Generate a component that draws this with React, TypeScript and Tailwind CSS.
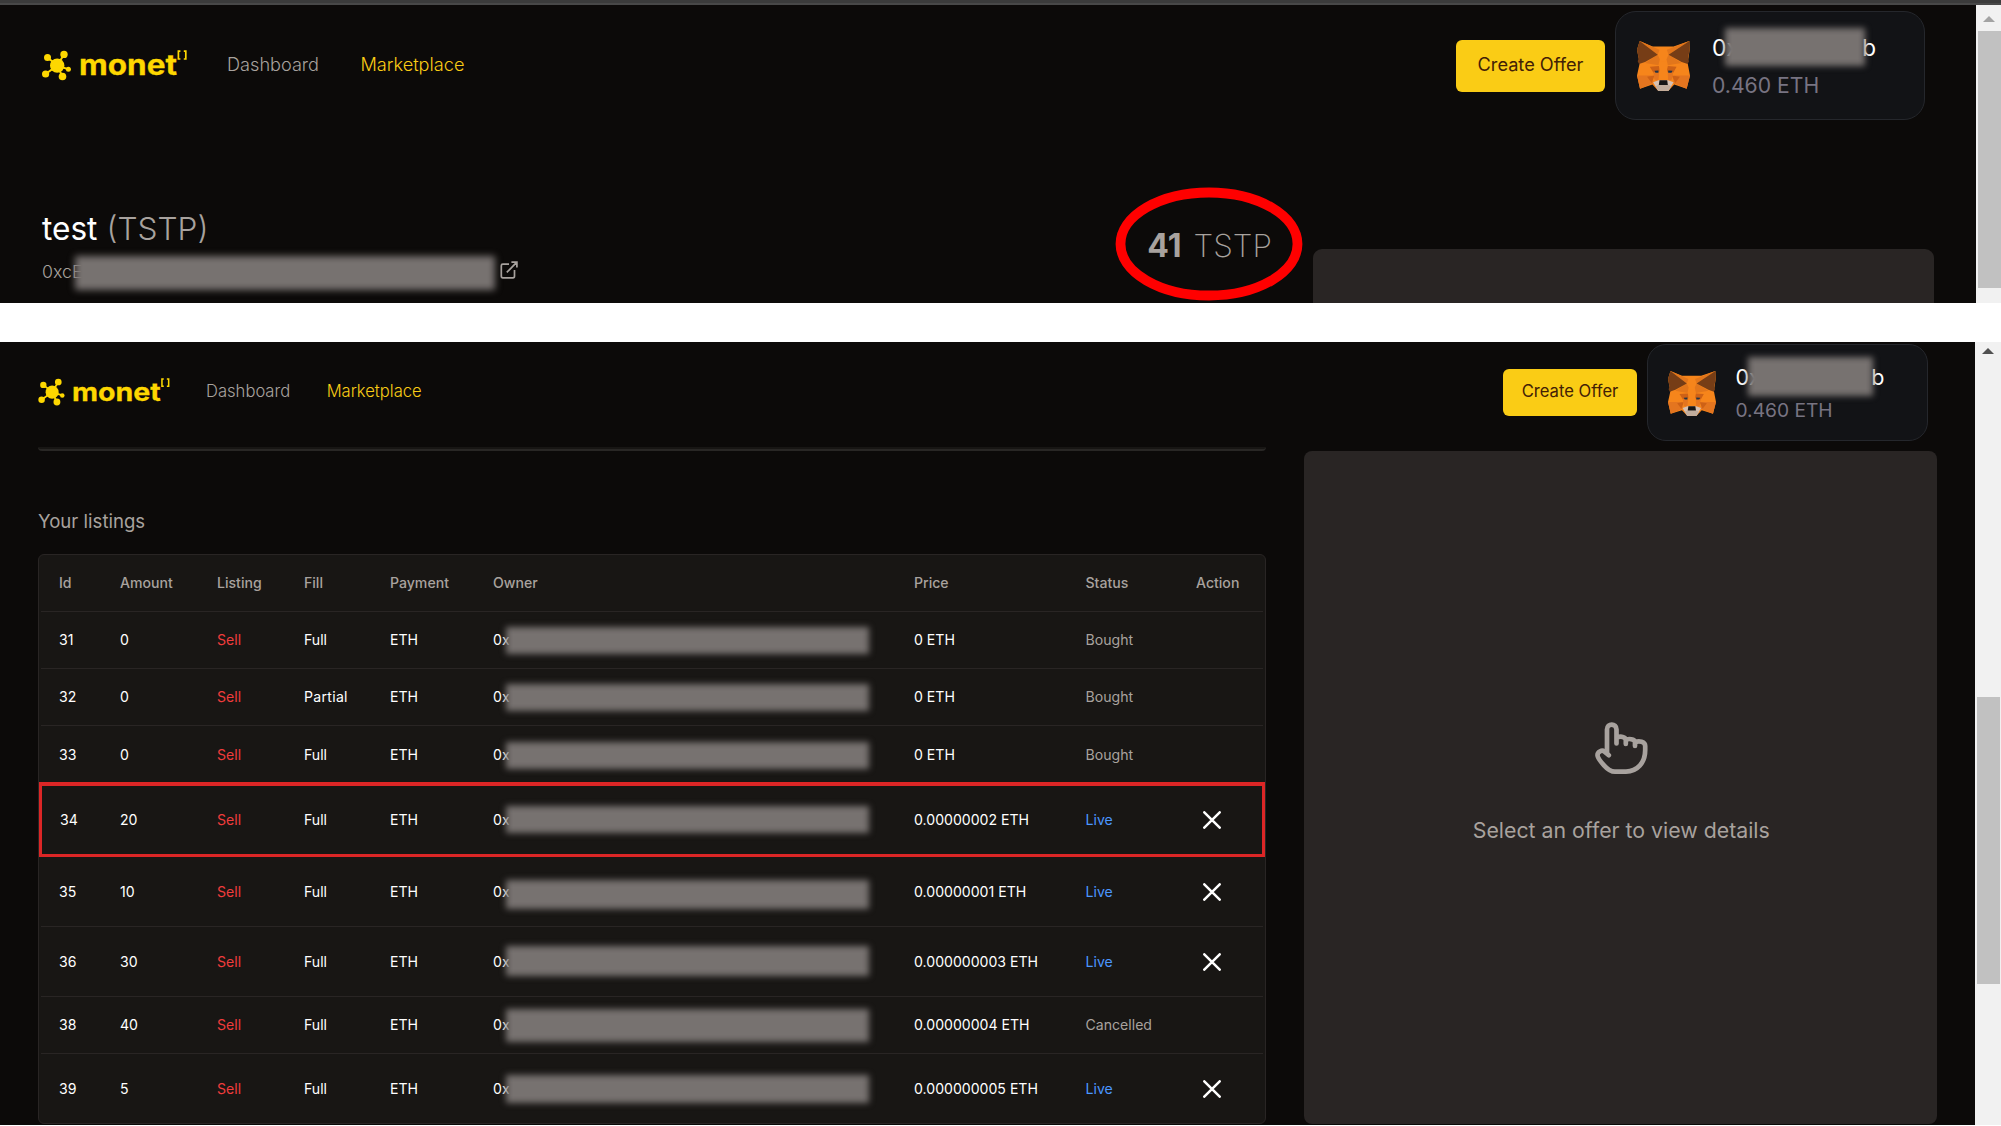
import React from "react";
import { clsx } from "clsx";

type Size = "lg" | "sm";

function Logo({ className }: { className: string }) {
  return (
    <svg viewBox="0 0 146 32" className={clsx("overflow-visible", className)} fill="#fed700" stroke="#fed700">
      <g stroke="none">
        <circle cx="15.2" cy="15.6" r="7.2" />
        <circle cx="5.5" cy="7.6" r="3.5" />
        <circle cx="22" cy="4.4" r="3.7" />
        <circle cx="3.6" cy="24" r="3.6" />
        <circle cx="20.5" cy="26.5" r="3.8" />
        <circle cx="26.4" cy="19.2" r="2.5" />
      </g>
      <path d="M15.2 15.6L5.5 7.6M15.2 15.6L22 4.4M15.2 15.6L3.6 24M15.2 15.6L20.5 26.5M15.2 15.6L26.4 19.2" strokeWidth="2" fill="none" />
      <text x="37" y="25" fontFamily="Inter, sans-serif" fontWeight="700" fontSize="28" strokeWidth="0.3" textLength="98" lengthAdjust="spacingAndGlyphs">
        monet
      </text>
      <path d="M138.4 1.2H136.4V9H138.4M141.8 1.2H143.8V9H141.8" strokeWidth="1.7" fill="none" />
    </svg>
  );
}

function Fox({ className }: { className: string }) {
  return (
    <svg viewBox="54 36 158 148" preserveAspectRatio="none" className={className}>
      <path fill="#f6851b" d="M62 36L100 52H163L210 36L211 62L205 102L212 138L202 177L165 165L148 183H117L100 165L63 177L54 138L62 102L54 62Z" />
      <path fill="#e2761b" d="M62 36L121 62L116 77ZM210 36L143 62L148 77ZM116 77L78 101L118 108L122 90ZM148 77L187 101L146 108L142 90Z" />
      <path fill="#763d16" d="M62 36L116 77L78 98L60 104L56 96L59 88L54 62ZM210 36L148 77L187 98L205 104L209 96L206 88L211 62Z" />
      <path fill="#e4751f" d="M54 138H100L103 160L63 177ZM212 138H164L162 160L202 177Z" />
      <path fill="#cd6116" d="M84 142L106 138L98 160ZM182 142L158 138L168 160ZM92 112L119 110L123 126L103 130ZM172 112L146 110L142 126L162 130Z" />
      <path fill="#e4751f" d="M103 130L120 128L118 154L106 150ZM162 130L145 128L147 154L158 150Z" />
      <path fill="#f6851b" d="M123 96H142L146 152H119Z" />
      <path fill="#233447" d="M106 124L118 123V130H109ZM160 124L147 123V130H157Z" />
      <path fill="#d7c1b3" d="M102 158L118 152H147L163 158L148 183H117Z" />
      <path fill="#c0ad9e" d="M110 170L120 165H145L156 170L148 183H117Z" />
      <path fill="#161616" d="M121 152H144L146 166H119Z" />
    </svg>
  );
}

function Mask({ className }: { className: string }) {
  return <span className={clsx("absolute bg-[#777270]", className)} />;
}

function Header({ size }: { size: Size }) {
  const lg = size === "lg";
  return (
    <header className={clsx("flex shrink-0 items-start", lg ? "h-[134px]" : "h-[105px]")}>
      <Logo className={lg ? "ml-[41.5px] mt-[45px] h-8 w-[146px]" : "ml-[37.5px] mt-[36px] h-[29px] w-[133px]"} />
      <nav className={clsx("flex font-light", lg ? "ml-[39.5px] mt-[49px] gap-[41.5px] text-[18.15px] leading-5" : "ml-[35.5px] mt-[39px] gap-[36.5px] text-[16.6px] leading-5")}>
        <a className="text-[#a8a29e]">Dashboard</a>
        <a className="text-[#facc15]">Marketplace</a>
      </nav>
      <div className="ml-auto flex items-start">
        <button
          className={clsx(
            "rounded-md bg-[#facc15] text-[#422006]",
            lg ? "mt-[35px] h-[52px] w-[149px] pb-[3px] text-[18.2px]" : "mt-[27px] h-[47px] w-[134px] pb-[2px] text-[16.6px]",
          )}
        >
          Create Offer
        </button>
        <div
          className={clsx(
            "flex items-start border border-[#25272c] bg-[#121316]",
            lg ? "ml-[10px] mr-[51px] mt-[6px] h-[109px] w-[310px] rounded-[21px]" : "ml-[10px] mr-[47px] mt-[2px] h-[97px] w-[281px] rounded-[19px]",
          )}
        >
          <Fox className={lg ? "ml-[21px] mt-[29px] h-[50px] w-[53px]" : "ml-[20px] mt-[26px] h-[45px] w-[48px]"} />
          <div className={clsx("flex flex-col", lg ? "ml-[22px] mt-[20.5px]" : "ml-[19.5px] mt-[16.5px]")}>
            <div className={clsx("relative flex justify-between leading-[30px] text-white", lg ? "w-[164px] text-[23px]" : "w-[149px] text-[21.5px]")}>
              <span>0x</span>
              <span>b</span>
              <Mask className={lg ? "left-[12.5px] top-[-5px] h-[38px] w-[140px] blur-[3px]" : "left-[12.5px] top-[-5px] h-[39px] w-[125px] blur-[3px]"} />
            </div>
            <div className={clsx("text-[#787482]", lg ? "mt-[7px] text-[21.2px] leading-[30px]" : "mt-[3px] text-[19.2px] leading-[30px]")}>0.460 ETH</div>
          </div>
        </div>
      </div>
    </header>
  );
}

function Scrollbar({ size }: { size: Size }) {
  const lg = size === "lg";
  return (
    <div className={clsx("flex shrink-0 flex-col bg-[#f1f1f1]", lg ? "w-[25px] pl-[2px]" : "w-[26px] pl-[2px] pr-[1px]")}>
      <svg viewBox="0 0 12 6" className={lg ? "ml-[5px] mt-[11px] h-1.5 w-3" : "ml-[5px] mt-[6px] h-1.5 w-3"}>
        <path d="M0 6L6 0L12 6Z" fill={lg ? "#a3a3a3" : "#505050"} />
      </svg>
      <div className={clsx("bg-[#c1c1c1]", lg ? "mt-[9px] h-[257px]" : "mt-[343px] h-[287px]")} />
    </div>
  );
}

type Row = {
  id: string;
  amount: string;
  fill: string;
  price: string;
  status: "Bought" | "Live" | "Cancelled";
  frame: string;
  mask: string;
};

const rows: Row[] = [
  { id: "31", amount: "0", fill: "Full", price: "0 ETH", status: "Bought", frame: "h-[57px]", mask: "top-[-3px] h-[27px]" },
  { id: "32", amount: "0", fill: "Partial", price: "0 ETH", status: "Bought", frame: "h-[57px]", mask: "top-[-3px] h-[27px]" },
  { id: "33", amount: "0", fill: "Full", price: "0 ETH", status: "Bought", frame: "h-[57px] pt-px", mask: "top-[-3px] h-[27px]" },
  { id: "34", amount: "20", fill: "Full", price: "0.00000002 ETH", status: "Live", frame: "h-[75px]", mask: "top-[-4px] h-[27px]" },
  { id: "35", amount: "10", fill: "Full", price: "0.00000001 ETH", status: "Live", frame: "h-[69px]", mask: "top-[-2px] h-[29px]" },
  { id: "36", amount: "30", fill: "Full", price: "0.000000003 ETH", status: "Live", frame: "h-[70px]", mask: "top-[-6px] h-[30px]" },
  { id: "38", amount: "40", fill: "Full", price: "0.00000004 ETH", status: "Cancelled", frame: "h-[57px]", mask: "top-[-6px] h-[33px]" },
  { id: "39", amount: "5", fill: "Full", price: "0.000000005 ETH", status: "Live", frame: "h-[70px]", mask: "top-[-4px] h-[28px]" },
];

const headings = ["Id", "Amount", "Listing", "Fill", "Payment", "Owner", "Price", "Status", "Action"];

function ListingRow({ row }: { row: Row }) {
  const selected = row.id === "34";
  return (
    <div
      className={clsx(
        "grid items-center text-[14.1px] leading-5 text-white",
        row.frame,
        selected
          ? "grid-cols-[60px_97px_87px_86px_103px_421px_171.5px_110.5px_1fr] border-[3px] border-t-4 border-[#dc2626] pl-[18px]"
          : "mx-[2px] grid-cols-[61px_97px_87px_86px_103px_421px_171.5px_110.5px_1fr] pl-[18px]",
        !selected && row.id !== "35" && "border-t border-[#292524]",
      )}
    >
      <span>{row.id}</span>
      <span>{row.amount}</span>
      <span className="text-[#f03c3c]">Sell</span>
      <span className={row.fill === "Partial" ? "tracking-[0.02em]" : ""}>{row.fill}</span>
      <span>ETH</span>
      <span className="relative">
        0x
        <Mask className={clsx("left-[13px] w-[363px] blur-[3px]", row.mask)} />
      </span>
      <span>{row.price}</span>
      <span className={row.status === "Live" ? "text-[#4b97ff]" : "text-[#a8a29e]"}>{row.status}</span>
      <span>
        {row.status === "Live" && (
          <svg viewBox="0 0 18 18" className="ml-[7px] size-[18px]" stroke="#fff" strokeWidth="2.5" strokeLinecap="round">
            <path d="M1.3 1.3L16.7 16.7M16.7 1.3L1.3 16.7" />
          </svg>
        )}
      </span>
    </div>
  );
}

function TopScreen() {
  return (
    <section className="flex h-[298px] bg-[#0c0a09]">
      <div className="flex grow flex-col">
        <Header size="lg" />
        <div className="flex grow items-start">
          <div className="ml-[42px] mt-[71.5px]">
            <h1 className="flex gap-[9px] text-[31.6px] leading-9 text-white">
              test <span className="text-[31.6px] font-light text-[#a8a29e]">(TSTP)</span>
            </h1>
            <div className="mt-[15.5px] flex items-start text-[17.8px] font-light leading-5 text-[#a8a29e]">
              <span className="relative w-[457.5px]">
                0xcE
                <Mask className="left-[33px] top-[-6px] h-[34px] w-[420px] blur-[3.5px]" />
              </span>
              <svg viewBox="0 0 18 18" className="-mt-[1.5px] size-[18px]" fill="none" stroke="#a8a29e" strokeWidth="1.7">
                <path d="M9 3.2H2.8Q1.3 3.2 1.3 4.7V15Q1.3 16.8 2.8 16.8H13Q14.5 16.8 14.5 15V9M6.8 11.4L16.6 1.3M11.4 1.1H16.9V6.6" />
              </svg>
            </div>
          </div>
          <div className="relative ml-auto mr-[41px] mt-[87px] text-[32px] leading-10 text-[#a8a29e]">
            <span className="font-bold">41</span>
            <span className="ml-[12px] text-[31.5px] font-extralight">TSTP</span>
            <svg viewBox="0 0 188 114" className="absolute left-[-32.5px] top-[-39.5px] h-[114px] w-[188px]">
              <ellipse cx="94" cy="57" rx="88.5" ry="51.5" fill="none" stroke="#ff0000" strokeWidth="9.8" />
            </svg>
          </div>
          <div className="mr-[42px] mt-[110px] h-[54px] w-[621px] rounded-t-[9px] bg-[#292524]" />
        </div>
      </div>
      <Scrollbar size="lg" />
    </section>
  );
}

function BottomScreen() {
  return (
    <section className="flex h-[783px] bg-[#0c0a09]">
      <div className="flex grow flex-col">
        <Header size="sm" />
        <div className="flex">
          <div className="ml-[38px] w-[1228px]">
            <div className="h-1 rounded-b-[4px] border-b-2 border-[#292725] bg-[#181614]" />
            <h2 className="mt-[58px] text-[18.6px] leading-[24px] text-[#a8a29e]">Your listings</h2>
            <div className="mt-[21px] rounded-[6px] border border-[#292524] bg-[#181614]">
              <div className="mx-[2px] grid h-14 grid-cols-[61px_97px_87px_86px_103px_421px_171.5px_110.5px_1fr] items-center pl-[18px] text-[14.1px] font-medium leading-5 text-[#a8a29e]">
                {headings.map((h) => (
                  <span key={h}>{h}</span>
                ))}
              </div>
              {rows.map((row) => (
                <ListingRow key={row.id} row={row} />
              ))}
            </div>
          </div>
          <aside className="ml-[38px] mt-[4px] flex h-[673px] w-[632.5px] flex-col items-center rounded-lg bg-[#292524] pt-[271px]">
            <svg viewBox="0 0 53 52" className="ml-[3px] h-[52px] w-[53px]" fill="none" stroke="#a8a29e" strokeWidth="4.7" strokeLinecap="round" strokeLinejoin="round">
              <path d="M13.8 33.2L9.5 29.6C7 27.6 2.4 29.5 2.5 33.2C2.6 36.2 6 40 9 43.3C13 47.8 16 49.6 20 49.6H31C42 49.6 50.2 41 50.2 28V24C50.2 19.5 44 18.6 40.5 20" />
              <path d="M12 31V7.5C12 1 21.5 1 21.5 7.5V21.5M21.5 15.8C26 13.6 30.5 15 30.8 18V22M31 17.6C36 16 40 18 40 20V24" />
            </svg>
            <p className="ml-[2px] mt-[44px] text-[21.3px] leading-6 text-[#a8a29e]">Select an offer to view details</p>
          </aside>
        </div>
      </div>
      <Scrollbar size="sm" />
    </section>
  );
}

export default function App() {
  return (
    <main className="flex h-[1126px] w-[2001px] flex-col overflow-hidden bg-white font-['Inter',sans-serif]">
      <div className="h-[5px] border-b-2 border-[#484848] bg-[#3b3b3b]" />
      <TopScreen />
      <div className="h-[39px]" />
      <BottomScreen />
    </main>
  );
}
